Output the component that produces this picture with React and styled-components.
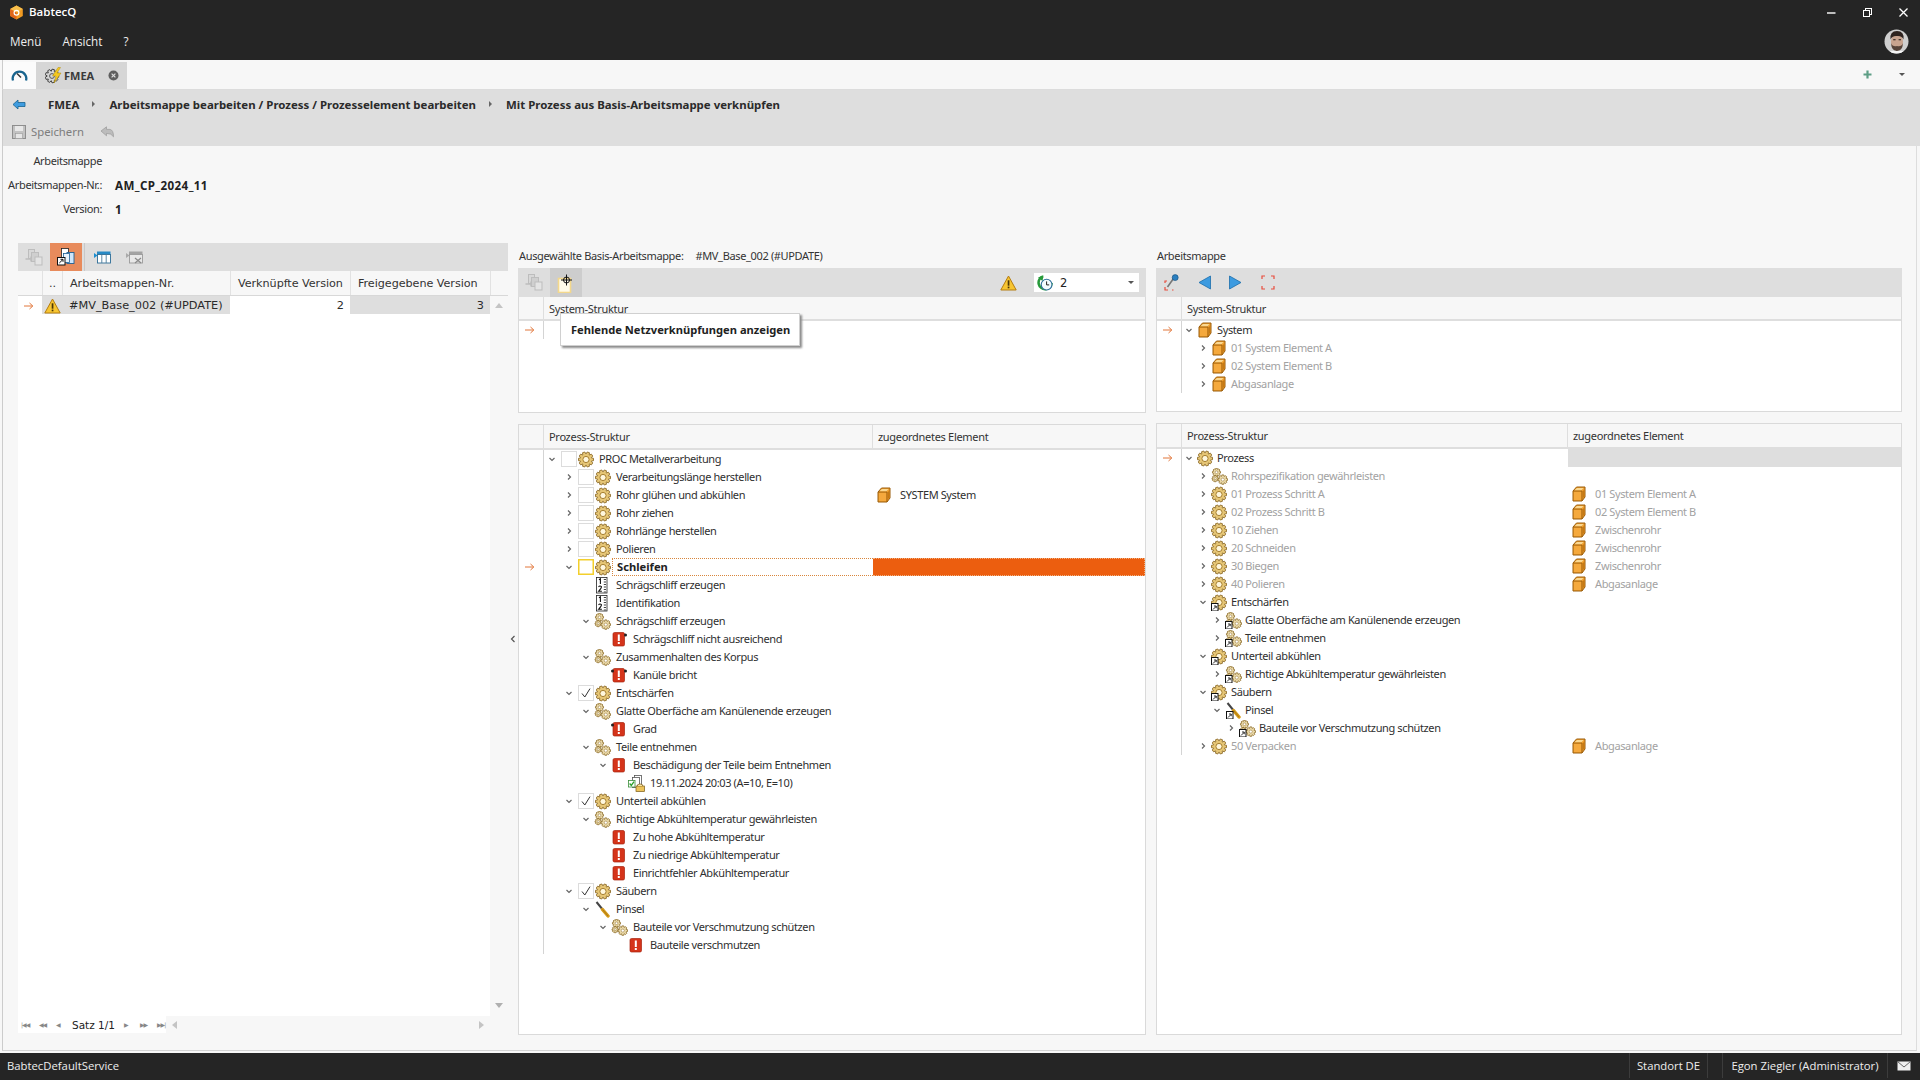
import React from "react";
import styled, { createGlobalStyle } from "styled-components";

const Global = createGlobalStyle`
  html, body { margin: 0; padding: 0; background: #f7f7f7; }
  * { box-sizing: border-box; }
  body { font-family: "Noto Sans", "Liberation Sans", sans-serif; color: #222; }
`;

const Page = styled.div`
  width: 1920px; height: 1080px; display: flex; flex-direction: column; overflow: hidden; background: #f7f7f7;
`;
const TitleBar = styled.header`
  height: 60px; background: #252525; color: #fff; display: flex; flex-direction: column; flex: none;
`;
const TitleRow = styled.div`height: 24px; display: flex; align-items: center; padding-left: 9px;`;
const AppName = styled.span`font: 600 11.5px "Open Sans", sans-serif; margin: 0 0 2px 5px;`;
const WindowButtons = styled.div`margin-left: auto; display: flex; align-items: center; gap: 27px; padding-right: 12px;`;
const MenuRow = styled.nav`height: 36px; display: flex; align-items: center; padding: 0 11px 2px 10px; gap: 21px;`;
const MenuItem = styled.span`font: 400 11.7px "Open Sans", sans-serif; color: #eee;`;
const Avatar = styled.div`margin-left: auto; width: 25px; height: 25px;`;

const TabStrip = styled.div`
  height: 30px; flex: none; margin-left: 2px; border-left: 1px solid #ccc; border-bottom: 1px solid #dcdcdc;
  display: flex; align-items: flex-end; background: #f7f7f7; padding-right: 15px;
`;
const HomeTab = styled.div`width: 33px; height: 27px; display: flex; align-items: center; justify-content: center; background: #fbfbfb;`;
const FmeaTab = styled.div`
  width: 91px; height: 27px; background: #d6d6d6; display: flex; align-items: center; padding-left: 9px;
  font: 700 11px "Noto Sans", sans-serif; color: #3a3a3a; gap: 2px;
`;
const TabClose = styled.span`margin-left: 12px; display: flex;`;
const TabTools = styled.div`margin-left: auto; display: flex; align-items: center; gap: 27px; height: 29px;`;

const CommandArea = styled.div`
  flex: none; margin-left: 2px; height: 56px; background: #dedede; border-left: 1px solid #ccc; display: flex; flex-direction: column;
`;
const Crumbs = styled.div`
  height: 28px; display: flex; align-items: center; padding-left: 9px;
  font: 700 11.45px "Noto Sans", sans-serif; color: #2b2b2b;
`;
const CrumbBack = styled.span`width: 36px; display: flex;`;
const CrumbSep = styled.span`
  width: 0; height: 0; border-left: 3px solid #666; border-top: 3px solid transparent; border-bottom: 3px solid transparent; margin: 0 14px 0 13px;
`;
const SaveBar = styled.div`height: 28px; display: flex; align-items: center; padding-left: 9px; font: 400 11.3px "Noto Sans", sans-serif; color: #7d7d7d;`;
const SaveLabel = styled.span`margin: 0 16px 1px 5px;`;

const Main = styled.main`
  flex: none; margin: 0 3px 2px 2px; height: 905px; border-left: 1px solid #ccc; border-right: 1px solid #ddd; border-bottom: 1px solid #d4d4d4;
  padding: 0 14px 0 15px; display: flex; flex-direction: column;
`;
const FormBlock = styled.div`
  height: 97px; flex: none; display: grid; grid-template-columns: 94px auto; grid-auto-rows: 24px; align-content: start; padding-top: 3px;
  margin-left: -15px; padding-left: 5px; column-gap: 13px; justify-content: start;
`;
const FormLabel = styled.span`
  font: 400 11px "Noto Sans", sans-serif; letter-spacing: -0.35px; color: #333; text-align: right; white-space: nowrap; align-self: center; padding-bottom: 1px;
`;
const FormValue = styled.span`font: 700 11.6px "Noto Sans", sans-serif; letter-spacing: 0.4px; color: #222; align-self: center;`;

const Columns = styled.div`display: flex; height: 792px; flex: none;`;
const LeftPanel = styled.section`width: 490px; height: 790px; display: flex; flex-direction: column; flex: none;`;
const Handle = styled.div`width: 10px; flex: none; display: flex; align-items: center; justify-content: center;`;
const MidColumn = styled.section`width: ${p => p.$w}px; flex: none; display: flex; flex-direction: column; position: relative; margin-right: ${p => p.$mr || 0}px;`;

const Toolbar = styled.div`
  height: ${p => p.$h}px; flex: none; background: #dedede; display: flex; align-items: center; padding-left: ${p => p.$pl || 0}px;
`;
const ToolButton = styled.button`
  width: ${p => p.$w || 32}px; height: 100%; border: 0; padding: 0; background: ${p => p.$bg || "transparent"}; display: flex; align-items: center; justify-content: center; flex: none;
`;
const ToolSep = styled.span`width: 1px; height: 100%; background: #c8c8c8; margin: 0 1px 0 2px; flex: none;`;
const ToolSpacer = styled.span`flex: 1;`;

const LeftHead = styled.div`
  height: 25px; flex: none; display: grid; grid-template-columns: 24px 20px 168px 120px 140px 18px; background: #f7f7f7; border-bottom: 1px solid #d8d8d8;
  font: 400 11.2px "DejaVu Sans", sans-serif; letter-spacing: -0.05px; color: #333;
`;
const LeftHeadCell = styled.div`
  display: flex; align-items: center; padding-left: ${p => p.$pl ?? 7}px; border-left: ${p => p.$noBorder ? "0" : "1px solid #e2e2e2"}; white-space: nowrap;
`;
const LeftRow = styled.div`
  height: 19px; flex: none; display: grid; grid-template-columns: 24px 20px 168px 120px 140px 18px; background: #fff; border-bottom: 1px solid #d8d8d8;
  font: 400 11.3px "DejaVu Sans", sans-serif; color: #2a2a2a;
`;
const LeftCell = styled.div`
  display: flex; align-items: center; white-space: nowrap;
  justify-content: ${p => p.$right ? "flex-end" : p.$center ? "center" : "flex-start"};
  background: ${p => p.$bg || (p.$gray ? "#dedede" : "#fff")};
  padding: 1px ${p => p.$right ? 6 : 0}px 0 ${p => p.$pl || 0}px;
`;
const LeftBody = styled.div`flex: 1; background: #fff; display: flex; justify-content: flex-end; margin-top: -1px;`;
const VScroll = styled.div`width: 18px; background: #f7f7f7; display: flex; flex-direction: column; justify-content: flex-end; align-items: center; padding-bottom: 8px;`;
const Pager = styled.div`height: 17px; flex: none; display: flex; background: #f7f7f7;`;
const PagerNav = styled.div`
  width: 148px; background: #fff; display: flex; align-items: center; padding-left: 3px; font: 400 10.5px "DejaVu Sans", sans-serif; color: #222; gap: 9px; white-space: nowrap;
`;
const PagerGlyph = styled.span`font: 400 6px "DejaVu Sans", sans-serif; color: #888; letter-spacing: -1px; width: ${p => p.$w || 9}px; flex: none;`;
const HScroll = styled.div`width: 342px; display: flex; align-items: center; justify-content: space-between; padding: 0 24px 0 6px;`;
const Tri = styled.span`
  width: 0; height: 0; display: block;
  ${p => p.$dir === "up" && "border-bottom: 5px solid #c4c4c4; border-left: 4px solid transparent; border-right: 4px solid transparent;"}
  ${p => p.$dir === "down" && "border-top: 5px solid #b0b0b0; border-left: 4px solid transparent; border-right: 4px solid transparent;"}
  ${p => p.$dir === "left" && "border-right: 5px solid #c4c4c4; border-top: 4px solid transparent; border-bottom: 4px solid transparent;"}
  ${p => p.$dir === "right" && "border-left: 5px solid #c4c4c4; border-top: 4px solid transparent; border-bottom: 4px solid transparent;"}
  ${p => p.$dir === "menu" && "border-top: 3px solid #555; border-left: 3px solid transparent; border-right: 3px solid transparent;"}
`;

const PaneTitle = styled.div`
  height: 25px; flex: none; display: flex; align-items: center; padding: 0 0 1px 1px; font: 400 11px "Noto Sans", sans-serif; letter-spacing: -0.35px; color: #333; gap: 12px;
`;
const Combo = styled.div`
  width: 105px; height: 19px; background: #fff; display: flex; align-items: center; padding: 0 5px 0 3px; font: 400 11.5px "DejaVu Sans", sans-serif; margin: 0 7px 0 17px; gap: 7px;
`;
const ComboArrow = styled.span`margin-left: auto; display: flex;`;

const Grid = styled.div`
  height: ${p => p.$h ? `${p.$h}px` : "auto"}; flex: ${p => p.$h ? "none" : 1}; margin-top: ${p => p.$mt || 0}px;
  background: #fff; border: 1px solid #dadada; border-top-width: ${p => p.$mt ? 1 : 0}px; display: flex; flex-direction: column; overflow: hidden;
`;
const GridHead = styled.div`
  height: ${p => p.$h || 24}px; flex: none; display: flex; background: #f7f7f7; border-bottom: 2px solid #dedede;
  font: 400 11px "Noto Sans", sans-serif; letter-spacing: -0.3px; color: #333;
`;
const HeadCell = styled.div`
  width: ${p => p.$w ? `${p.$w}px` : "auto"}; flex: ${p => p.$w ? "none" : 1}; display: flex; align-items: center; padding-left: ${p => p.$pl ?? 5}px;
  border-right: ${p => p.$last ? "0" : "1px solid #dedede"};
`;
const Row = styled.div`
  height: 18px; display: flex; flex: none; font: 400 11px "Noto Sans", sans-serif; letter-spacing: -0.38px;
  color: ${p => p.$muted ? "#a2a2a2" : "#2f2f2f"};
`;
const IndicatorCell = styled.div`
  width: 25px; flex: none; border-right: 1px solid #d4d4d4; display: flex; align-items: center; justify-content: center; padding-right: 3px;
`;
const TreeCell = styled.div`
  width: ${p => p.$w}px; flex: none; display: flex; align-items: center; padding-left: ${p => p.$pad + p.$d * p.$step}px;
`;
const Chevron = styled.span`width: 14px; height: 18px; flex: none; display: flex; align-items: center; justify-content: center;`;
const CheckBox = styled.span`
  width: 16px; height: 16px; flex: none; margin-left: 2px; border: 1px solid ${p => p.$sel ? "#f3cf2c" : "#dcdcdc"}; ${p => p.$sel && "box-shadow: inset 0 0 0 0.5px #f3cf2c;"}
  background: #fff; display: flex; align-items: center; justify-content: center;
`;
const IconSlot = styled.span`width: 18px; height: 18px; flex: none; display: flex; align-items: center; justify-content: center;`;
const NodeText = styled.span`
  flex: 1; height: 18px; display: flex; align-items: center; white-space: nowrap; padding: 0 0 2px ${p => p.$pl}px; min-width: 0;
  ${p => p.$sel && "font-weight: 700; font-size: 11.2px; letter-spacing: 0; padding-bottom: 1px; color: #222; border: 1px dotted #d8863d; border-right: 0;"}
`;
const AssignCell = styled.div`
  flex: 1; display: flex; align-items: center; padding-left: ${p => p.$pl}px; white-space: nowrap;
  background: ${p => p.$bg || "transparent"}; ${p => p.$sel && "border: 1px dotted #f0b080; border-left: 0;"}
`;
const AssignText = styled.span`margin: 0 0 2px 9px;`;
const Tooltip = styled.div`
  position: absolute; left: 42px; top: 70px; width: 240px; height: 33px; background: #fff; border: 1px solid #d0d0d0; box-shadow: 2px 2px 2px #8c8c8c;
  display: flex; align-items: center; padding-left: 10px; font: 700 11.15px "Noto Sans", sans-serif; color: #222; white-space: nowrap; z-index: 2;
`;
const StatusBar = styled.footer`
  height: 27px; flex: none; background: #252525; color: #eee; display: flex; align-items: stretch; font: 400 11.3px "Open Sans", sans-serif; padding-bottom: 2px;
`;
const StatusLeft = styled.div`flex: 1; display: flex; align-items: center; padding-left: 7px;`;
const StatusCell = styled.div`
  width: ${p => p.$w}px; flex: none; display: flex; align-items: center; justify-content: center; border-left: 1px solid #3c3c3c;
`;

/* ---------- drawn icons ---------- */
const gearPath = (cx, cy, ro, ri, n) => {
  let d = "";
  for (let i = 0; i < n; i++) {
    const a = (i / n) * Math.PI * 2;
    const w = Math.PI / n;
    const pts = [[ri, a - w * 0.95], [ro, a - w * 0.5], [ro, a + w * 0.5], [ri, a + w * 0.95]];
    pts.forEach(([r, t], j) => {
      d += `${i === 0 && j === 0 ? "M" : "L"}${(cx + r * Math.cos(t)).toFixed(2)} ${(cy + r * Math.sin(t)).toFixed(2)} `;
    });
  }
  return d + "Z";
};
const Svg = ({ w = 16, h = 16, vb, children }) => (
  <svg width={w} height={h} viewBox={vb || `0 0 ${w} ${h}`} style={{ display: "block", flex: "none" }}>{children}</svg>
);
const LinkBadge = ({ x = 0, y = 9 }) => (
  <g transform={`translate(${x} ${y})`}>
    <rect x="0.5" y="0.5" width="6.5" height="7.5" fill="#fff" stroke="#111" />
    <path d="M2 6.5 L5 3.5 M3 3 H5.2 V5.2" stroke="#111" strokeWidth="0.9" fill="none" />
  </g>
);
const Gear = ({ link }) => (
  <Svg w={16} h={17}>
    <path d={gearPath(8, 8.5, 7.6, 5.6, 10)} fill="#e6c676" stroke="#8e6d2b" strokeWidth="0.9" />
    <circle cx="8" cy="8.5" r="3.1" fill="#fff7dd" stroke="#a67f2f" strokeWidth="1" />
    {link && <LinkBadge x={0} y={9} />}
  </Svg>
);
const SmallGear = ({ x, y, r }) => (
  <g>
    <path d={gearPath(x, y, r, r * 0.72, 8)} fill="#ead9a8" stroke="#8e6d2b" strokeWidth="0.8" />
    <circle cx={x} cy={y} r={r * 0.32} fill="#fff" stroke="#8e6d2b" strokeWidth="0.5" />
  </g>
);
const Gears = ({ link }) => (
  <Svg w={17} h={17}>
    <SmallGear x={5.5} y={4.3} r={4.1} />
    <SmallGear x={4.2} y={10.6} r={3.2} />
    <SmallGear x={11.8} y={11.6} r={4.8} />
    {link && <LinkBadge x={0} y={9} />}
  </Svg>
);
const Cube = () => (
  <Svg w={14} h={16}>
    <path d="M1 5 L4.5 1 H13 V11 L10 15 H1 Z" fill="#f0a030" stroke="#9a5d0a" strokeWidth="1" />
    <path d="M1 5 H10 V15" fill="none" stroke="#9a5d0a" strokeWidth="1" />
    <path d="M2 6 H9 V14 H2 Z" fill="#f5a93d" />
    <path d="M2.5 4.2 L5 2 H11.5 L9.5 4.2 Z" fill="#fbd891" />
    <path d="M11 5 L12.2 3.5 V10.5 L11 12.5 Z" fill="#c97a12" />
  </Svg>
);
const NumberList = () => (
  <Svg w={12} h={17}>
    <rect x="0.5" y="0.5" width="10.5" height="15.5" fill="#fff" stroke="#222" strokeWidth="0.8" />
    <path d="M3 2.8 L4.4 1.8 V7 M2.5 9.8 Q4 8.2 5.4 9.6 Q5.8 10.6 2.6 14.3 H5.9" stroke="#111" strokeWidth="1.1" fill="none" />
    <path d="M7.8 2.5 H10 M7.8 5 H10 M7.8 7.5 H10 M7.8 10 H10 M7.8 12.5 H10 M7.8 15 H10" stroke="#444" strokeWidth="1" />
  </Svg>
);
const RedIssue = ({ left, right }) => (
  <Svg w={16} h={16}>
    <rect x="2" y="1.5" width="11.5" height="13.5" rx="1.5" fill="#d5341a" stroke="#a8240e" strokeWidth="0.7" />
    <rect x="6.8" y="3.5" width="2" height="6.5" fill="#fff" />
    <rect x="6.8" y="11" width="2" height="2" fill="#fff" />
    {left && <circle cx="1.5" cy="4" r="1.5" fill="#222" />}
    {right && <circle cx="14.5" cy="4" r="1.5" fill="#222" />}
  </Svg>
);
const Brush = ({ link }) => (
  <Svg w={15} h={17}>
    <path d="M1.5 1 L8 9" stroke="#444" strokeWidth="2" />
    <path d="M7.5 8.5 L13 15" stroke="#d69a18" strokeWidth="3.4" strokeLinecap="round" />
    <path d="M7.5 8.5 L13 15" stroke="#8a6410" strokeWidth="0.6" />
    {link && <LinkBadge x={0} y={9} />}
  </Svg>
);
const DocLock = () => (
  <Svg w={17} h={17}>
    <rect x="6.5" y="0.5" width="7" height="10" fill="#fff" stroke="#555" strokeWidth="0.8" />
    <rect x="4.5" y="2.5" width="7" height="10" fill="#fff" stroke="#555" strokeWidth="0.8" />
    <rect x="0.5" y="5.5" width="6.5" height="6.5" fill="#fff" stroke="#3a8e3a" strokeWidth="0.8" />
    <path d="M1.6 8.5 L3.3 10.4 L6 6.6" stroke="#2aa02a" strokeWidth="1.3" fill="none" />
    <rect x="8" y="11" width="8.5" height="5.5" fill="#edc35a" stroke="#7a5a14" strokeWidth="0.7" />
    <path d="M9.5 11 V9.8 Q12 8 14.5 9.8 V11" stroke="#7a5a14" strokeWidth="0.7" fill="#f7e3a4" />
  </Svg>
);
const NODE_ICONS = { gear: Gear, gears: Gears, num: NumberList, red: RedIssue, brush: Brush, doc: DocLock };

const ChevronIcon = ({ open }) => (
  <Svg w={8} h={8}>
    {open
      ? <path d="M1.5 3 L4 5.5 L6.5 3" stroke="#666" strokeWidth="1.2" fill="none" />
      : <path d="M3 1.5 L5.5 4 L3 6.5" stroke="#666" strokeWidth="1.2" fill="none" />}
  </Svg>
);
const OrangeArrow = () => (
  <Svg w={10} h={8}>
    <path d="M0 4 H8.5 M5.5 1 L8.8 4 L5.5 7" stroke="#e2763a" strokeWidth="1" fill="none" />
  </Svg>
);
const CheckMark = () => (
  <Svg w={12} h={12}>
    <path d="M2 6.5 L4.8 10 L10 1.6" stroke="#333" strokeWidth="1" fill="none" />
  </Svg>
);
const Warning = () => (
  <Svg w={17} h={16}>
    <path d="M8.5 1 L16.2 15 H0.8 Z" fill="#f7c531" stroke="#b47c10" strokeWidth="1" strokeLinejoin="round" />
    <rect x="7.7" y="5.3" width="1.7" height="5.4" fill="#4a3506" />
    <rect x="7.7" y="11.6" width="1.7" height="1.7" fill="#4a3506" />
  </Svg>
);
const Logo = () => (
  <Svg w={15} h={15}>
    <path d="M7.5 0.5 L13.8 4 V11 L7.5 14.5 L1.2 11 V4 Z" fill="#f09a22" />
    <path d="M7.5 0.5 L13.8 4 L7.5 7.5 L1.2 4 Z" fill="#f9c04c" />
    <path d="M7.5 7.5 V14.5 L1.2 11 V4 Z" fill="#e0661a" />
    <circle cx="7.5" cy="7.7" r="2.4" fill="none" stroke="#fff" strokeWidth="1.2" />
  </Svg>
);
const Gauge = () => (
  <Svg w={17} h={13}>
    <path d="M2 11.5 A6.8 6.8 0 1 1 15 11.5" fill="none" stroke="#18648e" strokeWidth="2.3" />
    <path d="M6 4.5 L10 8.5" stroke="#333" strokeWidth="1.5" />
  </Svg>
);
const GearBolt = () => (
  <Svg w={17} h={17}>
    <path d={gearPath(7, 9, 6.8, 4.8, 9)} fill="none" stroke="#444" strokeWidth="1" />
    <circle cx="7" cy="9" r="2.4" fill="none" stroke="#555" strokeWidth="1" />
    <path d="M13 0.5 L7.5 9 H11 L9 16 L16 6 H12 L15.5 0.5 Z" fill="#f4c820" stroke="#b38f0d" strokeWidth="0.5" />
  </Svg>
);
const CloseDot = () => (
  <Svg w={11} h={11}>
    <circle cx="5.5" cy="5.5" r="5" fill="#5f5f5f" />
    <path d="M3.6 3.6 L7.4 7.4 M7.4 3.6 L3.6 7.4" stroke="#ddd" strokeWidth="1.2" />
  </Svg>
);
const BackArrow = () => (
  <Svg w={14} h={11}>
    <path d="M1 5.5 L6 1 V3.5 H13 V7.5 H6 V10 Z" fill="#3f9ce0" stroke="#15628f" strokeWidth="0.8" />
  </Svg>
);
const Floppy = () => (
  <Svg w={14} h={14}>
    <rect x="0.5" y="0.5" width="13" height="13" fill="#c2c2c2" stroke="#8e8e8e" />
    <rect x="3" y="1" width="8" height="5" fill="#e8e8e8" />
    <rect x="3.5" y="8.5" width="7" height="5" fill="#e6e6e6" stroke="#999" strokeWidth="0.6" />
  </Svg>
);
const UndoArrow = () => (
  <Svg w={14} h={12}>
    <path d="M1 5 L6.5 0.8 V3.4 H10 Q13.5 4 13.5 10.8 Q11.5 7.2 6.5 7.4 V9.8 Z" fill="#bcbcbc" stroke="#9a9a9a" strokeWidth="0.7" />
  </Svg>
);
const WinMin = () => <Svg w={9} h={9}><path d="M0 5 H8.5" stroke="#fff" strokeWidth="1.4" /></Svg>;
const WinRestore = () => (
  <Svg w={9} h={9}>
    <rect x="2.5" y="0.5" width="6" height="6" fill="none" stroke="#fff" />
    <rect x="0.5" y="2.5" width="6" height="6" fill="#252525" stroke="#fff" />
  </Svg>
);
const WinClose = () => <Svg w={9} h={9}><path d="M0.5 0.5 L8.5 8.5 M8.5 0.5 L0.5 8.5" stroke="#fff" strokeWidth="1.3" /></Svg>;
const Face = () => (
  <Svg w={25} h={25}>
    <defs><clipPath id="fc"><circle cx="12.5" cy="12.5" r="12" /></clipPath></defs>
    <g clipPath="url(#fc)">
      <rect width="25" height="25" fill="#cfcfcf" />
      <ellipse cx="13" cy="13" rx="6" ry="8" fill="#c9a48f" />
      <path d="M6.5 10.5 Q5.5 2 13 2 Q20.5 2 19.5 10.5 Q18 6.5 13 7 Q8 6.5 6.5 10.5 Z" fill="#2f2420" />
      <path d="M7 14 Q7.5 22 13 22 Q18.5 22 19 14 Q17.5 18 13 17 Q8.5 18 7 14 Z" fill="#57443a" />
      <path d="M9.2 10.8 H11.6 M14.6 10.8 H17" stroke="#1d1512" strokeWidth="1.1" />
      <path d="M2 25 Q6 21 13 22 Q20 21 24 25 Z" fill="#f4f4f4" />
    </g>
  </Svg>
);
const Plus = () => <Svg w={9} h={9}><path d="M4.5 0.5 V8.5 M0.5 4.5 H8.5" stroke="#5d9e85" strokeWidth="2.2" /></Svg>;
const Mail = () => (
  <Svg w={14} h={10}>
    <rect x="0.5" y="0.5" width="13" height="9" fill="#efefef" />
    <path d="M0.5 0.5 L7 6 L13.5 0.5" stroke="#666" strokeWidth="1" fill="none" />
  </Svg>
);
const DocMove = ({ color = "#bdbdbd" }) => (
  <Svg w={18} h={17}>
    <rect x="3.5" y="0.5" width="6" height="9" fill="#d8d8d8" stroke={color} />
    <rect x="6.5" y="3.5" width="7" height="9" fill="#cfcfcf" stroke={color} />
    <path d="M0.5 10 H6 M6 7.5 V12.5" stroke={color} strokeWidth="1.4" />
    <rect x="10" y="8" width="7" height="8" fill="#e4e4e4" stroke={color} />
  </Svg>
);
const DocLinkActive = () => (
  <Svg w={18} h={18}>
    <rect x="4.5" y="0.5" width="7" height="10" fill="#fff" stroke="#222" strokeWidth="0.8" />
    <rect x="10" y="4.5" width="7" height="11" fill="#cfe6fb" stroke="#1f5f93" strokeWidth="0.9" />
    <rect x="6.5" y="5.5" width="6" height="9" fill="#e8f3fd" stroke="#1f5f93" strokeWidth="0.8" />
    <rect x="0.5" y="9.5" width="7.5" height="7.5" fill="#fff" stroke="#111" />
    <path d="M2.3 15 L5.8 11.6 M3.5 11.3 H6 V13.8" stroke="#111" strokeWidth="1" fill="none" />
  </Svg>
);
const GridBlue = () => (
  <Svg w={17} h={13}>
    <path d="M0 2 L3.5 4.5 L0 7 Z" fill="#1d8ed0" />
    <rect x="3" y="0.5" width="13.5" height="3" fill="#2689c5" />
    <rect x="3.5" y="3.5" width="13" height="8.5" fill="#fff" stroke="#2c6c95" strokeWidth="0.9" />
    <path d="M7.8 3.5 V12 M12.2 3.5 V12" stroke="#4c7d9c" strokeWidth="0.9" />
  </Svg>
);
const GridGray = () => (
  <Svg w={17} h={13}>
    <path d="M0 2 L3.5 4.5 L0 7 Z" fill="#aaa" />
    <rect x="3" y="0.5" width="13.5" height="3" fill="#a3a3a3" />
    <rect x="3.5" y="3.5" width="13" height="8.5" fill="#e8e8e8" stroke="#9a9a9a" strokeWidth="0.9" />
    <path d="M9 7 L15 12 M15 7 L9 12" stroke="#8a8a8a" strokeWidth="1.2" />
  </Svg>
);
const DocCross = () => (
  <Svg w={20} h={20}>
    <rect x="2.5" y="5.5" width="12" height="14" fill="#fffbe9" stroke="#f3d88c" strokeWidth="1.6" />
    <circle cx="10.5" cy="7" r="3" fill="none" stroke="#111" strokeWidth="1" />
    <path d="M10.5 1.5 V12.5 M5 7 H16" stroke="#111" strokeWidth="1" />
  </Svg>
);
const ClockGreen = () => (
  <Svg w={16} h={16}>
    <path d="M6 1.5 A6.5 6.5 0 1 0 14.6 8" fill="none" stroke="#279a3a" strokeWidth="2.6" />
    <path d="M1 2.5 L6.5 0.5 L5.5 6 Z" fill="#279a3a" />
    <circle cx="9.6" cy="9.6" r="5.4" fill="#f3fbff" stroke="#2e6f9a" strokeWidth="1.1" />
    <path d="M9.6 6.4 V9.9 H12.2" stroke="#222" strokeWidth="1" fill="none" />
  </Svg>
);
const Brackets = () => (
  <Svg w={14} h={15}>
    <path d="M1 4 V1 H4 M10 1 H13 V4 M1 11 V14 H4 M10 14 H13 V11" stroke="#e84c3d" strokeWidth="1.2" fill="none" />
  </Svg>
);
const PinBrackets = () => (
  <Svg w={16} h={17}>
    <path d="M1 9 V7 H3 M1 13 V16 H4 M8 16 H9.5" stroke="#e84c3d" strokeWidth="1.2" fill="none" />
    <path d="M3.5 13 L9.5 4.5" stroke="#777" strokeWidth="1.6" />
    <circle cx="11.2" cy="3.6" r="3" fill="#2a7fc0" stroke="#134d7a" strokeWidth="0.6" />
  </Svg>
);
const BlueTri = ({ right }) => (
  <Svg w={14} h={15}>
    <path d={right ? "M1.5 1 L13 7.5 L1.5 14 Z" : "M12.5 1 L1 7.5 L12.5 14 Z"} fill="#3d9be0" stroke="#1b6dab" strokeWidth="0.8" />
  </Svg>
);
const ThinChevronLeft = () => (
  <Svg w={6} h={8}><path d="M4.5 1 L1.5 4 L4.5 7" stroke="#555" strokeWidth="1.2" fill="none" /></Svg>
);

/* ---------- data ---------- */
const MID = [
  { d: 0, c: "o", k: false, i: "gear", t: "PROC Metallverarbeitung" },
  { d: 1, c: "c", k: false, i: "gear", t: "Verarbeitungslänge herstellen" },
  { d: 1, c: "c", k: false, i: "gear", t: "Rohr glühen und abkühlen", a: "SYSTEM System" },
  { d: 1, c: "c", k: false, i: "gear", t: "Rohr ziehen" },
  { d: 1, c: "c", k: false, i: "gear", t: "Rohrlänge herstellen" },
  { d: 1, c: "c", k: false, i: "gear", t: "Polieren" },
  { d: 1, c: "o", k: false, i: "gear", t: "Schleifen", sel: true },
  { d: 2, i: "num", t: "Schrägschliff erzeugen" },
  { d: 2, i: "num", t: "Identifikation" },
  { d: 2, c: "o", i: "gears", t: "Schrägschliff erzeugen" },
  { d: 3, i: "red", t: "Schrägschliff nicht ausreichend", right: true },
  { d: 2, c: "o", i: "gears", t: "Zusammenhalten des Korpus" },
  { d: 3, i: "red", t: "Kanüle bricht", left: true, right: true },
  { d: 1, c: "o", k: true, i: "gear", t: "Entschärfen" },
  { d: 2, c: "o", i: "gears", t: "Glatte Oberfäche am Kanülenende erzeugen" },
  { d: 3, i: "red", t: "Grad", left: true },
  { d: 2, c: "o", i: "gears", t: "Teile entnehmen" },
  { d: 3, c: "o", i: "red", t: "Beschädigung der Teile beim Entnehmen" },
  { d: 4, i: "doc", t: "19.11.2024 20:03 (A=10, E=10)" },
  { d: 1, c: "o", k: true, i: "gear", t: "Unterteil abkühlen" },
  { d: 2, c: "o", i: "gears", t: "Richtige Abkühltemperatur gewährleisten" },
  { d: 3, i: "red", t: "Zu hohe Abkühltemperatur" },
  { d: 3, i: "red", t: "Zu niedrige Abkühltemperatur" },
  { d: 3, i: "red", t: "Einrichtfehler Abkühltemperatur" },
  { d: 1, c: "o", k: true, i: "gear", t: "Säubern" },
  { d: 2, c: "o", i: "brush", t: "Pinsel" },
  { d: 3, c: "o", i: "gears", t: "Bauteile vor Verschmutzung schützen" },
  { d: 4, i: "red", t: "Bauteile verschmutzen" },
];
const RIGHT = [
  { d: 0, c: "o", i: "gear", t: "Prozess", arrow: true, grayA: true },
  { d: 1, c: "c", i: "gears", t: "Rohrspezifikation gewährleisten", m: true },
  { d: 1, c: "c", i: "gear", t: "01 Prozess Schritt A", m: true, a: "01 System Element A" },
  { d: 1, c: "c", i: "gear", t: "02 Prozess Schritt B", m: true, a: "02 System Element B" },
  { d: 1, c: "c", i: "gear", t: "10 Ziehen", m: true, a: "Zwischenrohr" },
  { d: 1, c: "c", i: "gear", t: "20 Schneiden", m: true, a: "Zwischenrohr" },
  { d: 1, c: "c", i: "gear", t: "30 Biegen", m: true, a: "Zwischenrohr" },
  { d: 1, c: "c", i: "gear", t: "40 Polieren", m: true, a: "Abgasanlage" },
  { d: 1, c: "o", i: "gear", t: "Entschärfen", link: true },
  { d: 2, c: "c", i: "gears", t: "Glatte Oberfäche am Kanülenende erzeugen", link: true },
  { d: 2, c: "c", i: "gears", t: "Teile entnehmen", link: true },
  { d: 1, c: "o", i: "gear", t: "Unterteil abkühlen", link: true },
  { d: 2, c: "c", i: "gears", t: "Richtige Abkühltemperatur gewährleisten", link: true },
  { d: 1, c: "o", i: "gear", t: "Säubern", link: true },
  { d: 2, c: "o", i: "brush", t: "Pinsel", link: true },
  { d: 3, c: "c", i: "gears", t: "Bauteile vor Verschmutzung schützen", link: true },
  { d: 1, c: "c", i: "gear", t: "50 Verpacken", m: true, a: "Abgasanlage" },
];
const SYS = [
  { d: 0, c: "o", t: "System" },
  { d: 1, c: "c", t: "01 System Element A", m: true },
  { d: 1, c: "c", t: "02 System Element B", m: true },
  { d: 1, c: "c", t: "Abgasanlage", m: true },
];

const NodeIcon = ({ n }) => {
  const I = NODE_ICONS[n.i];
  return <I link={n.link} left={n.left} right={n.right} />;
};

const MidRow = ({ n }) => (
  <Row>
    <IndicatorCell>{n.sel && <OrangeArrow />}</IndicatorCell>
    <TreeCell $w={329} $pad={1} $d={n.d} $step={17}>
      <Chevron>{n.c && <ChevronIcon open={n.c === "o"} />}</Chevron>
      {n.k !== undefined && <CheckBox $sel={n.sel}>{n.k && <CheckMark />}</CheckBox>}
      <IconSlot><NodeIcon n={n} /></IconSlot>
      <NodeText $pl={n.k === undefined ? 5 : 4} $sel={n.sel}>{n.t}</NodeText>
    </TreeCell>
    <AssignCell $pl={4} $bg={n.sel ? "#ec5e0f" : undefined} $sel={n.sel}>
      {n.a && <Cube />}
      {n.a && <AssignText>{n.a}</AssignText>}
    </AssignCell>
  </Row>
);
const RightRow = ({ n }) => (
  <Row $muted={n.m}>
    <IndicatorCell>{n.arrow && <OrangeArrow />}</IndicatorCell>
    <TreeCell $w={386} $pad={0} $d={n.d} $step={14}>
      <Chevron>{n.c && <ChevronIcon open={n.c === "o"} />}</Chevron>
      <IconSlot><NodeIcon n={n} /></IconSlot>
      <NodeText $pl={3}>{n.t}</NodeText>
    </TreeCell>
    <AssignCell $pl={4} $bg={n.grayA ? "#dedede" : undefined}>
      {n.a && <Cube />}
      {n.a && <AssignText>{n.a}</AssignText>}
    </AssignCell>
  </Row>
);
const SysRow = ({ n }) => (
  <Row $muted={n.m}>
    <IndicatorCell>{!n.m && <OrangeArrow />}</IndicatorCell>
    <TreeCell $w={500} $pad={0} $d={n.d} $step={14}>
      <Chevron>{n.c && <ChevronIcon open={n.c === "o"} />}</Chevron>
      <IconSlot><Cube /></IconSlot>
      <NodeText $pl={3}>{n.t}</NodeText>
    </TreeCell>
  </Row>
);

export default function App() {
  return (
    <Page>
      <Global />
      <TitleBar>
        <TitleRow>
          <Logo />
          <AppName>BabtecQ</AppName>
          <WindowButtons><WinMin /><WinRestore /><WinClose /></WindowButtons>
        </TitleRow>
        <MenuRow>
          <MenuItem>Menü</MenuItem>
          <MenuItem>Ansicht</MenuItem>
          <MenuItem>?</MenuItem>
          <Avatar><Face /></Avatar>
        </MenuRow>
      </TitleBar>

      <TabStrip>
        <HomeTab><Gauge /></HomeTab>
        <FmeaTab><GearBolt />FMEA<TabClose><CloseDot /></TabClose></FmeaTab>
        <TabTools><Plus /><Tri $dir="menu" /></TabTools>
      </TabStrip>

      <CommandArea>
        <Crumbs>
          <CrumbBack><BackArrow /></CrumbBack>
          FMEA<CrumbSep />
          Arbeitsmappe bearbeiten / Prozess / Prozesselement bearbeiten<CrumbSep />
          Mit Prozess aus Basis-Arbeitsmappe verknüpfen
        </Crumbs>
        <SaveBar>
          <Floppy /><SaveLabel>Speichern</SaveLabel><UndoArrow />
        </SaveBar>
      </CommandArea>

      <Main>
        <FormBlock>
          <FormLabel>Arbeitsmappe</FormLabel><span />
          <FormLabel>Arbeitsmappen-Nr.:</FormLabel><FormValue>AM_CP_2024_11</FormValue>
          <FormLabel>Version:</FormLabel><FormValue>1</FormValue>
        </FormBlock>

        <Columns>
          <LeftPanel>
            <Toolbar $h={28}>
              <ToolButton><DocMove /></ToolButton>
              <ToolButton $bg="#e88b5c"><DocLinkActive /></ToolButton>
              <ToolSep />
              <ToolButton><GridBlue /></ToolButton>
              <ToolButton><GridGray /></ToolButton>
            </Toolbar>
            <LeftHead>
              <LeftHeadCell $noBorder />
              <LeftHeadCell $pl={6}>..</LeftHeadCell>
              <LeftHeadCell>Arbeitsmappen-Nr.</LeftHeadCell>
              <LeftHeadCell>Verknüpfte Version</LeftHeadCell>
              <LeftHeadCell>Freigegebene Version</LeftHeadCell>
              <LeftHeadCell />
            </LeftHead>
            <LeftRow>
              <LeftCell $pl={6}><OrangeArrow /></LeftCell>
              <LeftCell $center $gray><Warning /></LeftCell>
              <LeftCell $gray $pl={7}>#MV_Base_002 (#UPDATE)</LeftCell>
              <LeftCell $right>2</LeftCell>
              <LeftCell $right $gray>3</LeftCell>
              <LeftCell $center $bg="#f7f7f7"><Tri $dir="up" /></LeftCell>
            </LeftRow>
            <LeftBody><VScroll><Tri $dir="down" /></VScroll></LeftBody>
            <Pager>
              <PagerNav>
                <PagerGlyph>|◀◀</PagerGlyph><PagerGlyph $w={8}>◀◀</PagerGlyph><PagerGlyph $w={7}>◀</PagerGlyph>
                <span>Satz 1/1</span>
                <PagerGlyph $w={7}>▶</PagerGlyph><PagerGlyph $w={8}>▶▶</PagerGlyph><PagerGlyph>▶▶|</PagerGlyph>
              </PagerNav>
              <HScroll><Tri $dir="left" /><Tri $dir="right" /></HScroll>
            </Pager>
          </LeftPanel>

          <Handle><ThinChevronLeft /></Handle>

          <MidColumn $w={628} $mr={10}>
            <PaneTitle><span>Ausgewählte Basis-Arbeitsmappe:</span><span>#MV_Base_002 (#UPDATE)</span></PaneTitle>
            <Toolbar $h={29}>
              <ToolButton><DocMove /></ToolButton>
              <ToolButton $bg="#cdcdcd"><DocCross /></ToolButton>
              <ToolSpacer />
              <Warning />
              <Combo><ClockGreen />2<ComboArrow><Tri $dir="menu" /></ComboArrow></Combo>
            </Toolbar>
            <Grid $h={116}>
              <GridHead>
                <HeadCell $w={25} $pl={0} />
                <HeadCell $last>System-Struktur</HeadCell>
              </GridHead>
              <Row><IndicatorCell><OrangeArrow /></IndicatorCell></Row>
            </Grid>
            <Tooltip>Fehlende Netzverknüpfungen anzeigen</Tooltip>
            <Grid $mt={11}>
              <GridHead $h={25}>
                <HeadCell $w={25} $pl={0} />
                <HeadCell $w={329}>Prozess-Struktur</HeadCell>
                <HeadCell $last>zugeordnetes Element</HeadCell>
              </GridHead>
              {MID.map((n, i) => <MidRow key={i} n={n} />)}
            </Grid>
          </MidColumn>

          <MidColumn $w={746}>
            <PaneTitle>Arbeitsmappe</PaneTitle>
            <Toolbar $h={29}>
              <ToolButton $w={32}><PinBrackets /></ToolButton>
              <ToolButton $w={33}><BlueTri /></ToolButton>
              <ToolButton $w={28}><BlueTri right /></ToolButton>
              <ToolButton $w={38}><Brackets /></ToolButton>
            </Toolbar>
            <Grid $h={115}>
              <GridHead>
                <HeadCell $w={25} $pl={0} />
                <HeadCell $last>System-Struktur</HeadCell>
              </GridHead>
              {SYS.map((n, i) => <SysRow key={i} n={n} />)}
            </Grid>
            <Grid $mt={11}>
              <GridHead $h={25}>
                <HeadCell $w={25} $pl={0} />
                <HeadCell $w={386}>Prozess-Struktur</HeadCell>
                <HeadCell $last>zugeordnetes Element</HeadCell>
              </GridHead>
              {RIGHT.map((n, i) => <RightRow key={i} n={n} />)}
            </Grid>
          </MidColumn>
        </Columns>
      </Main>

      <StatusBar>
        <StatusLeft>BabtecDefaultService</StatusLeft>
        <StatusCell $w={78}>Standort DE</StatusCell>
        <StatusCell $w={15} />
        <StatusCell $w={165}>Egon Ziegler (Administrator)</StatusCell>
        <StatusCell $w={33}><Mail /></StatusCell>
      </StatusBar>
    </Page>
  );
}
